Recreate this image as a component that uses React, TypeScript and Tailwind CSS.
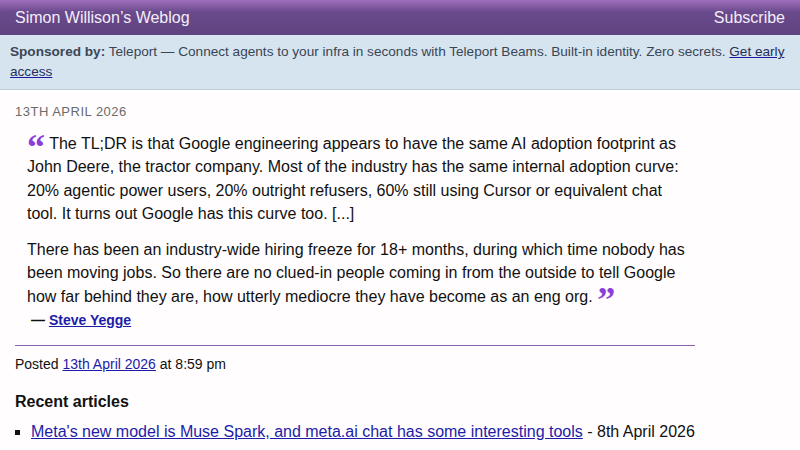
import React from "react";

const serif = { fontFamily: '"Liberation Serif", "DejaVu Serif", serif' };

export default function App() {
  return (
    <div className="min-h-[450px] bg-[#fffdfe] text-[#111]" style={{ fontFamily: '"Liberation Sans", Arial, sans-serif' }}>
      <header className="h-[35px] flex items-center justify-between px-[15px] text-white text-[16px] bg-[linear-gradient(to_bottom,#a06fbd_0px,#6a4a8c_12px,#5f4280_100%)]">
        <span className="text-[#f4eefa]">Simon Willison’s Weblog</span>
        <span className="text-[#f4eefa]">Subscribe</span>
      </header>
      <div className="bg-[#d6e4f0] border-b border-[#bccbd8] px-[10px] pt-[7px] pb-[7px] text-[13.6px] leading-[20px] text-[#3a4654]">
        <b>Sponsored by:</b> Teleport — Connect agents to your infra in seconds with Teleport Beams. Built-in identity. Zero secrets.{" "}
        <a className="underline text-[#22305a] decoration-[#1a1aa0]" href="#">Get early access</a>
      </div>
      <div className="w-[680px] ml-[15px]">
        <div className="mt-[12px] text-[13px] tracking-[0.5px] text-[#6b6b6b]">13TH APRIL 2026</div>
        <blockquote className="ml-[12px] mt-[10px] text-[16px] leading-[23.5px] text-[#111]">
          <p>
            <span className="font-bold text-[#8a3fd6] text-[36px] leading-[0] relative top-[10px]" style={serif}>“</span>{" "}
            The TL;DR is that Google engineering appears to have the same AI adoption footprint as John Deere, the tractor company. Most of the industry has the same internal adoption curve: 20% agentic power users, 20% outright refusers, 60% still using Cursor or equivalent chat tool. It turns out Google has this curve too. [...]
          </p>
          <p className="mt-[12px]">
            There has been an industry-wide hiring freeze for 18+ months, during which time nobody has been moving jobs. So there are no clued-in people coming in from the outside to tell Google how far behind they are, how utterly mediocre they have become as an eng org.{" "}
            <span className="font-bold text-[#8a3fd6] text-[36px] leading-[0] relative top-[10px]" style={serif}>”</span>
          </p>
        </blockquote>
        <p className="mt-[2px] text-[14px] font-bold" style={{ marginLeft: 16 }}>
          — <a href="#" className="underline text-[#1c1ca8]">Steve Yegge</a>
        </p>
        <div className="mt-[14px] h-px bg-[#9060b0]" />
        <p className="mt-[8px] text-[14px]">
          Posted <a href="#" className="underline text-[#1c1ca8]">13th April 2026</a> at 8:59 pm
        </p>
        <h3 className="mt-[15px] text-[16px] font-bold">Recent articles</h3>
        <ul className="mt-[6px] text-[16px] list-[square] pl-[16px]">
          <li className="whitespace-nowrap">
            <a href="#" className="underline text-[#1c1ca8]">Meta's new model is Muse Spark, and meta.ai chat has some interesting tools</a> - 8th April 2026
          </li>
        </ul>
      </div>
    </div>
  );
}
